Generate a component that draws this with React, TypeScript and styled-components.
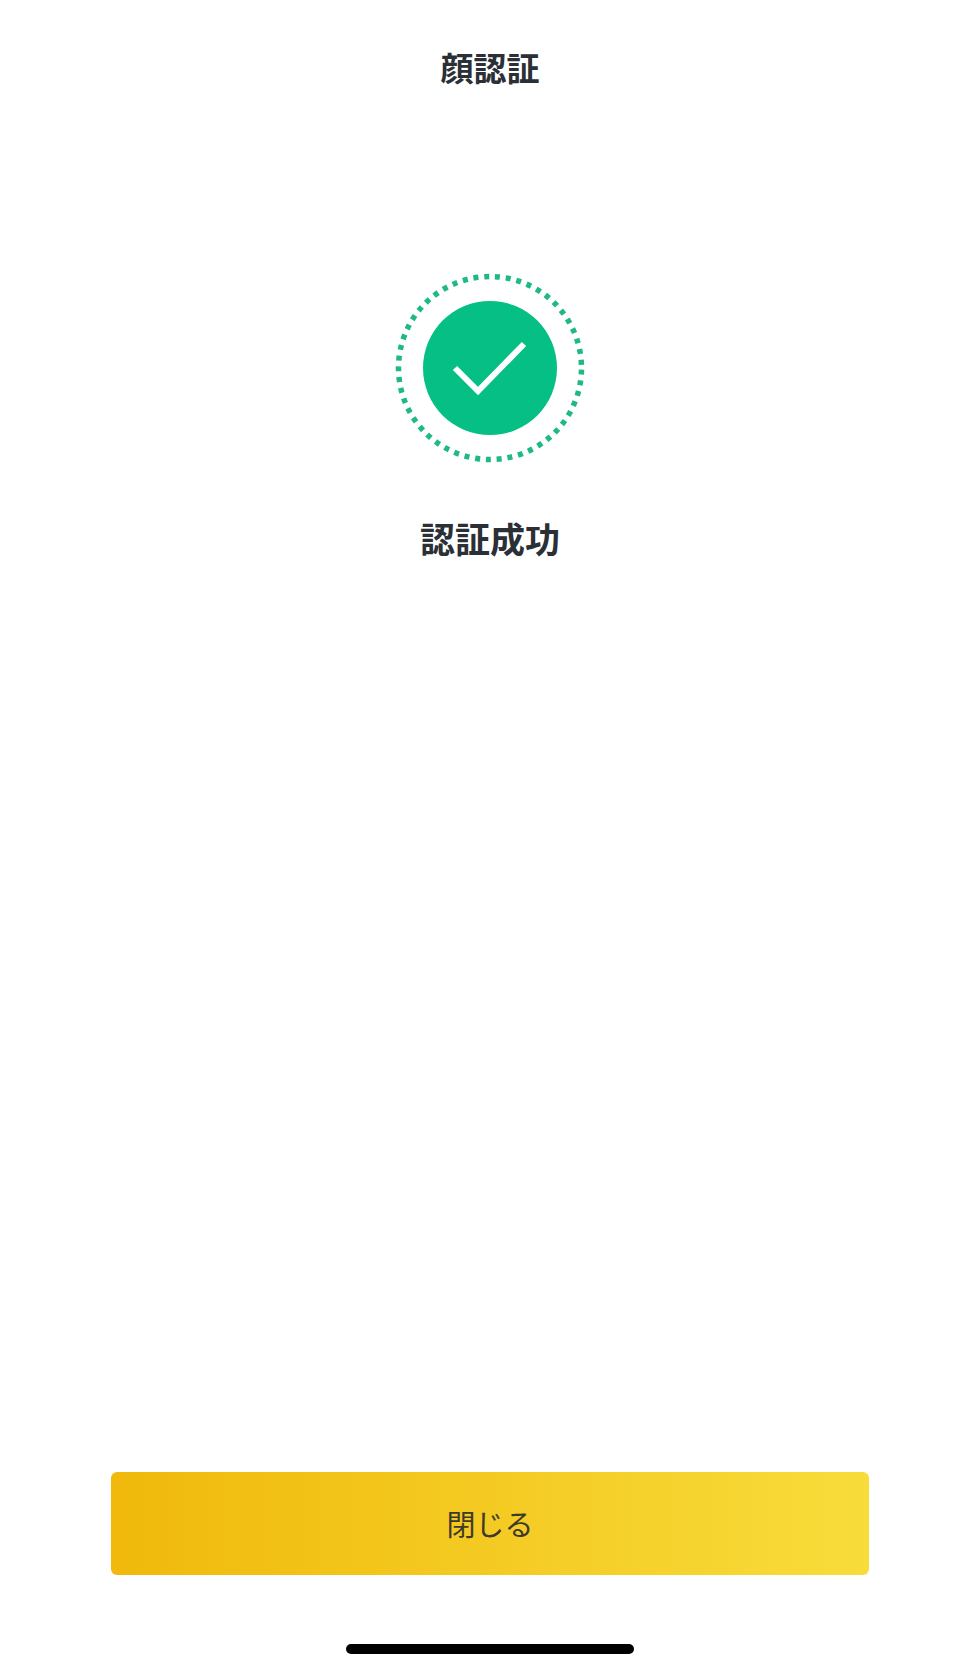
import React from "react";
import styled, { createGlobalStyle } from "styled-components";

const Global = createGlobalStyle`
  html, body { margin: 0; padding: 0; background: #ffffff; }
  body { font-family: "Noto Sans CJK JP", "Noto Sans", sans-serif; }
`;

const Page = styled.main`
  width: 980px;
  height: 1670px;
  display: flex;
  flex-direction: column;
  align-items: center;
  background: #ffffff;
  overflow: hidden;
`;

const Header = styled.h1`
  margin: 47px 0 0;
  height: 40px;
  font-size: 33px;
  line-height: 40px;
  font-weight: 700;
  color: #2b2f36;
`;

const Result = styled.section`
  margin-top: 185px;
  display: flex;
  flex-direction: column;
  align-items: center;
  gap: 52px;
`;

const Badge = styled.svg`
  display: block;
  width: 192px;
  height: 192px;
`;

const Message = styled.h2`
  margin: 0;
  height: 44px;
  font-size: 35px;
  line-height: 44px;
  font-weight: 700;
  color: #2b2f36;
`;

const Spacer = styled.div`
  flex: 1;
`;

const CloseButton = styled.button`
  width: 758px;
  height: 103px;
  padding: 0;
  border: none;
  border-radius: 6px;
  background: linear-gradient(90deg, #f0b90b 0%, #f8dc3a 100%);
  color: #3d3a2a;
  font-family: inherit;
  font-size: 29px;
  font-weight: 400;
  line-height: 103px;
`;

const HomeBar = styled.div`
  width: 288px;
  height: 10px;
  margin: 69px 0 16px;
  border-radius: 5px;
  background: #000000;
`;

export default function App() {
  const r = 91.5;
  const dash = (2 * Math.PI * r) / 53;
  return (
    <Page>
      <Global />
      <Header>顔認証</Header>
      <Result>
        <Badge viewBox="0 0 192 192" aria-hidden="true">
          <circle
            cx="96"
            cy="96"
            r={r}
            fill="none"
            stroke="#1eb985"
            strokeWidth="5.5"
            strokeDasharray={`5 ${dash - 5}`}
            transform="rotate(1 96 96)"
          />
          <circle cx="96" cy="96" r="67" fill="#05bf85" />
          <path
            d="M61 96 L84 119 L130 72"
            fill="none"
            stroke="#ffffff"
            strokeWidth="6"
          />
        </Badge>
        <Message>認証成功</Message>
      </Result>
      <Spacer />
      <CloseButton>閉じる</CloseButton>
      <HomeBar />
    </Page>
  );
}
